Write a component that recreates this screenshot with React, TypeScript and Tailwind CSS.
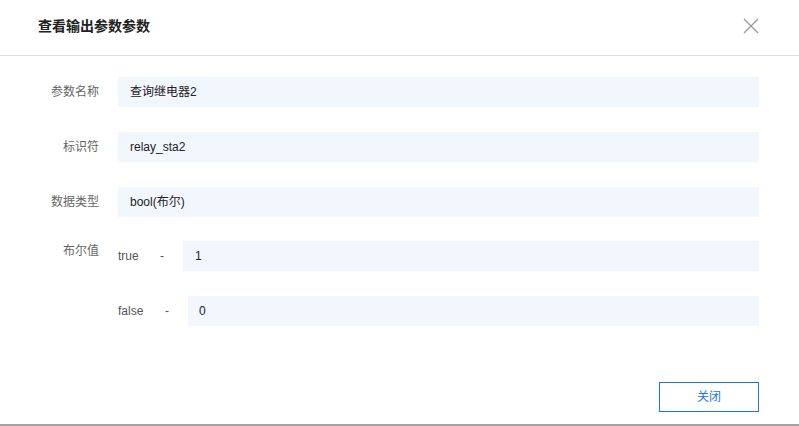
import React from "react";

const font = { fontFamily: '"Liberation Sans", Arial, "Noto Sans CJK SC", sans-serif' };

function Row({ label, value }: { label: string; value: string }) {
  return (
    <div className="flex items-center h-[30px]">
      <div className="w-[99px] text-right text-[12px] text-[#666]">{label}</div>
      <div className="ml-[19px] w-[641px] h-[30px] bg-[#f2f6fd] flex items-center pl-[12px] text-[12px] text-[#222]">
        {value}
      </div>
    </div>
  );
}

export default function App() {
  return (
    <div className="w-[799px] h-[426px] bg-white flex flex-col" style={font}>
      <div className="h-[56px] border-b border-[#dcdde2] flex items-center justify-between pl-[38px] pr-[40px] shrink-0">
        <div className="text-[14px] font-bold text-[#222] pb-[3px]">查看输出参数参数</div>
        <svg width="16" height="16" viewBox="0 0 16 16" className="mb-[4px]">
          <path d="M1 1 L15 15 M15 1 L1 15" stroke="#9a9a9a" strokeWidth="1.3" />
        </svg>
      </div>
      <div className="flex flex-col pt-[21px] grow">
        <Row label="参数名称" value="查询继电器2" />
        <div className="h-[25px]" />
        <Row label="标识符" value="relay_sta2" />
        <div className="h-[25px]" />
        <Row label="数据类型" value="bool(布尔)" />
        <div className="h-[24px]" />
        <div className="flex items-start h-[30px]">
          <div className="w-[99px] text-right text-[12px] text-[#666] leading-[20px]">布尔值</div>
          <div className="ml-[19px] flex items-center h-[30px] text-[12px] text-[#555]">
            <span className="w-[42px]">true</span>
            <span className="w-[23px]">-</span>
          </div>
          <div className="w-[576px] h-[30px] bg-[#f2f6fd] flex items-center pl-[12px] text-[12px] text-[#222]">
            1
          </div>
        </div>
        <div className="h-[25px]" />
        <div className="flex items-center h-[30px]">
          <div className="w-[99px]" />
          <div className="ml-[19px] flex items-center h-[30px] text-[12px] text-[#555]">
            <span className="w-[47px]">false</span>
            <span className="w-[23px]">-</span>
          </div>
          <div className="w-[571px] h-[30px] bg-[#f2f6fd] flex items-center pl-[11px] text-[12px] text-[#222]">
            0
          </div>
        </div>
        <div className="flex justify-end pr-[40px] mt-[56px]">
          <button className="w-[100px] h-[30px] border border-[#1a73f5] text-[#1a73f5] text-[12px] bg-white">
            关闭
          </button>
        </div>
      </div>
      <div className="h-[2px] bg-[#a3a3a3] shrink-0" />
    </div>
  );
}
